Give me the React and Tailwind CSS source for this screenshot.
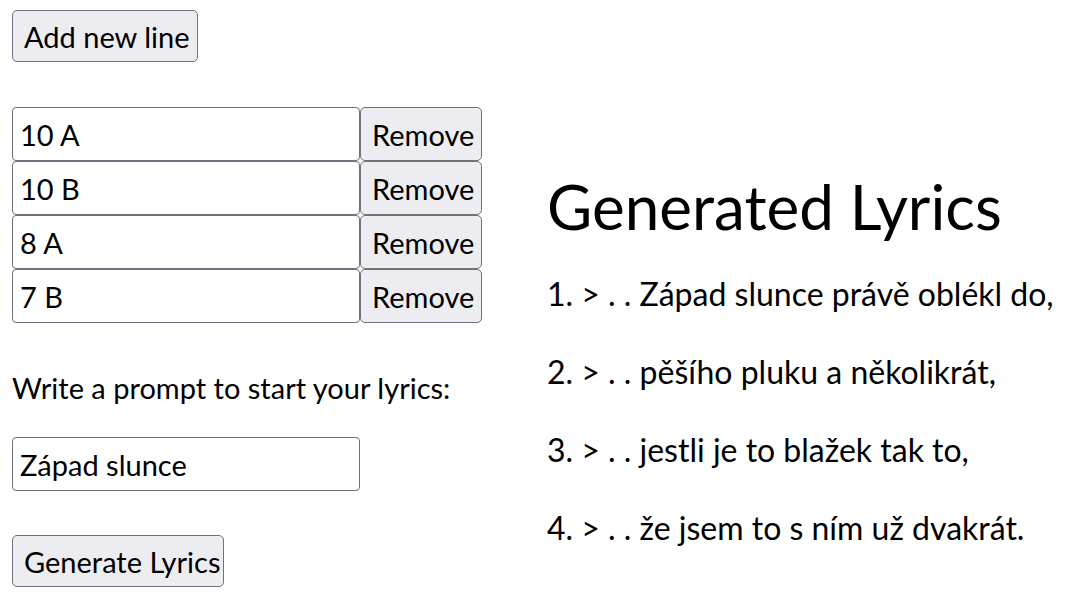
import React, { useState } from "react";

const initialLines = ["10 A", "10 B", "8 A", "7 B"];

const lyrics = [
  "Západ slunce právě oblékl do,",
  "pěšího pluku a několikrát,",
  "jestli je to blažek tak to,",
  "že jsem to s ním už dvakrát.",
];

const btn =
  "h-[52px] px-[11px] rounded-[5px] border border-[#70707f] bg-[#ededf1] text-black text-[29px] leading-none whitespace-nowrap";

const field =
  "h-[54px] w-[348px] px-[7px] rounded-[4px] border border-[#70707f] bg-white text-black text-[29px] outline-none";

export default function App() {
  const [lines, setLines] = useState(initialLines);
  const [prompt, setPrompt] = useState("Západ slunce");

  return (
    <div className="flex min-h-screen bg-white text-black font-['Lato','Segoe_UI',sans-serif]">
      {/* left column */}
      <div className="flex flex-col items-start pl-[12px] pt-[10px] w-[547px]">
        <button className={`${btn} w-[186px]`} onClick={() => setLines([...lines, ""])}>
          Add new line
        </button>

        <div className="mt-[45px] flex flex-col">
          {lines.map((line, i) => (
            <div key={i} className="flex">
              <input
                className={field}
                value={line}
                onChange={(e) => setLines(lines.map((l, j) => (j === i ? e.target.value : l)))}
              />
              <button
                className={`${btn} h-[54px] w-[122px] px-[10px]`}
                onClick={() => setLines(lines.filter((_, j) => j !== i))}
              >
                Remove
              </button>
            </div>
          ))}
        </div>

        <p className="mt-[46px] text-[29px] leading-[38px]">Write a prompt to start your lyrics:</p>

        <input className={`${field} mt-[30px] h-[53px]`} value={prompt} onChange={(e) => setPrompt(e.target.value)} />

        <button className={`${btn} mt-[44px] w-[212px]`}>Generate Lyrics</button>
      </div>

      {/* right column */}
      <div className="flex flex-col pt-[167px]">
        <h1 className="text-[62px] leading-[78px] font-normal">Generated Lyrics</h1>
        <ol className="mt-[29px] flex flex-col gap-[39px]">
          {lyrics.map((l, i) => (
            <li key={i} className="text-[32px] leading-[39px] whitespace-nowrap">
              {i + 1}. &gt; . . {l}
            </li>
          ))}
        </ol>
      </div>
    </div>
  );
}
